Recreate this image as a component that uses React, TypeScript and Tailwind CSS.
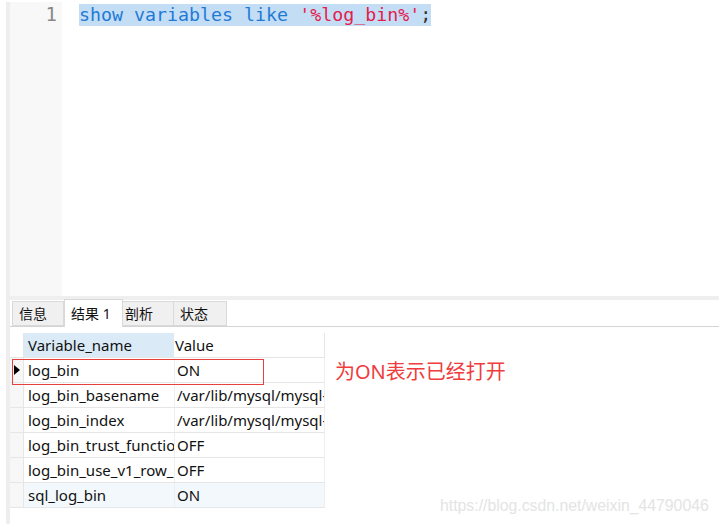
export default function App() {
  const rows = [
    { name: 'log_bin', value: 'ON' },
    { name: 'log_bin_basename', value: '/var/lib/mysql/mysql-bin' },
    { name: 'log_bin_index', value: '/var/lib/mysql/mysql-bin.index' },
    { name: 'log_bin_trust_function_creators', value: 'OFF' },
    { name: 'log_bin_use_v1_row_events', value: 'OFF' },
    { name: 'sql_log_bin', value: 'ON' },
  ]
  const tabs = ['信息', '结果 1', '剖析', '状态']
  const ui = { fontFamily: '"Noto Sans", "Noto Sans CJK SC", sans-serif' }

  return (
    <div className="relative w-[719px] h-[524px] bg-white pt-[2px] pl-[6px] flex flex-col overflow-hidden" style={ui}>
      <div className="flex-1 border-l-4 border-[#eeeeee] flex flex-col">
        {/* Editor */}
        <div className="h-[294px] flex">
          <div className="w-[52px] bg-[#f8f8f8] text-right pr-[5px] pt-[1px] text-[19px] leading-[22px] text-[#888888]" style={{ fontFamily: '"DejaVu Sans Mono", monospace' }}>
            1
          </div>
          <div className="flex-1 pl-[17px] pt-[1px]">
            <span className="bg-[#c3ddf5] text-[18.3px] leading-[22px] whitespace-pre inline-block" style={{ fontFamily: '"DejaVu Sans Mono", monospace' }}>
              <span className="text-[#1f7ad6]">show variables like </span>
              <span className="text-[#e3204b]">'%log_bin%'</span>
              <span className="text-[#333333]">;</span>
            </span>
          </div>
        </div>
        <div className="h-[4px] bg-[#efefef]" />

        {/* Tabs */}
        <div className="h-[27px] flex items-end pl-[2px] border-b border-[#d4d4d4]">
          {tabs.map((t, i) =>
            i === 1 ? (
              <div key={t} className="h-[28px] -mb-px w-[59px] bg-white border border-b-0 border-[#d9d9d9] flex items-center pl-[6px] text-[14px] text-[#111111]">
                {t}
              </div>
            ) : (
              <div key={t} className={`h-[25px] bg-[#f0f0f0] border border-[#d9d9d9] ${i === 0 ? 'w-[52px] pl-[6px]' : i === 2 ? 'w-[51px] pl-[2px] border-l-0' : 'w-[53px] pl-[6px] border-l-0'} flex items-center text-[14px] text-[#111111]`}>
                {t}
              </div>
            )
          )}
        </div>

        {/* Grid */}
        <div className="pt-[6px] flex">
          <div className="w-[315px] text-[15px] text-[#111111]">
            <div className="flex h-[25px] border-b border-[#e6e6e6]">
              <div className="w-[13px]" />
              <div className="w-[151px] bg-[#dbeaf7] pl-[4px] flex items-center border-l border-[#e6e6e6]">Variable_name</div>
              <div className="w-[151px] pl-[1px] flex items-center border-r border-[#e6e6e6]">Value</div>
            </div>
            {rows.map((r, i) => (
              <div key={r.name} className={`flex h-[25px] border-b border-[#e6e6e6] ${i === 5 ? 'bg-[#f3f8fc]' : 'bg-white'}`}>
                <div className="w-[13px] bg-[#f7f7f7] flex items-center justify-center">
                  {i === 0 && (
                    <svg width="6" height="10" viewBox="0 0 6 10">
                      <path d="M0 0 L6 5 L0 10 Z" fill="#000" />
                    </svg>
                  )}
                </div>
                <div className="w-[151px] pl-[4px] flex items-center border-l border-[#e6e6e6] overflow-hidden whitespace-nowrap">{r.name}</div>
                <div className="w-[151px] pl-[2px] flex items-center border-r border-l border-[#eeeeee] overflow-hidden whitespace-nowrap">{r.value}</div>
              </div>
            ))}
          </div>
        </div>
      </div>

      {/* annotation */}
      <div className="absolute left-[12px] top-[359px] w-[252px] h-[26px] border border-[#e8403f]" />
      <div className="absolute left-[335px] top-[357px] text-[20px] text-[#f03c3c]" style={ui}>
        为ON表示已经打开
      </div>
      <div className="absolute left-[440px] top-[494px] text-[15.8px] text-[#e4e4e4]" style={{ fontFamily: '"Liberation Sans", Arial, sans-serif' }}>
        https://blog.csdn.net/weixin_44790046
      </div>
    </div>
  )
}
